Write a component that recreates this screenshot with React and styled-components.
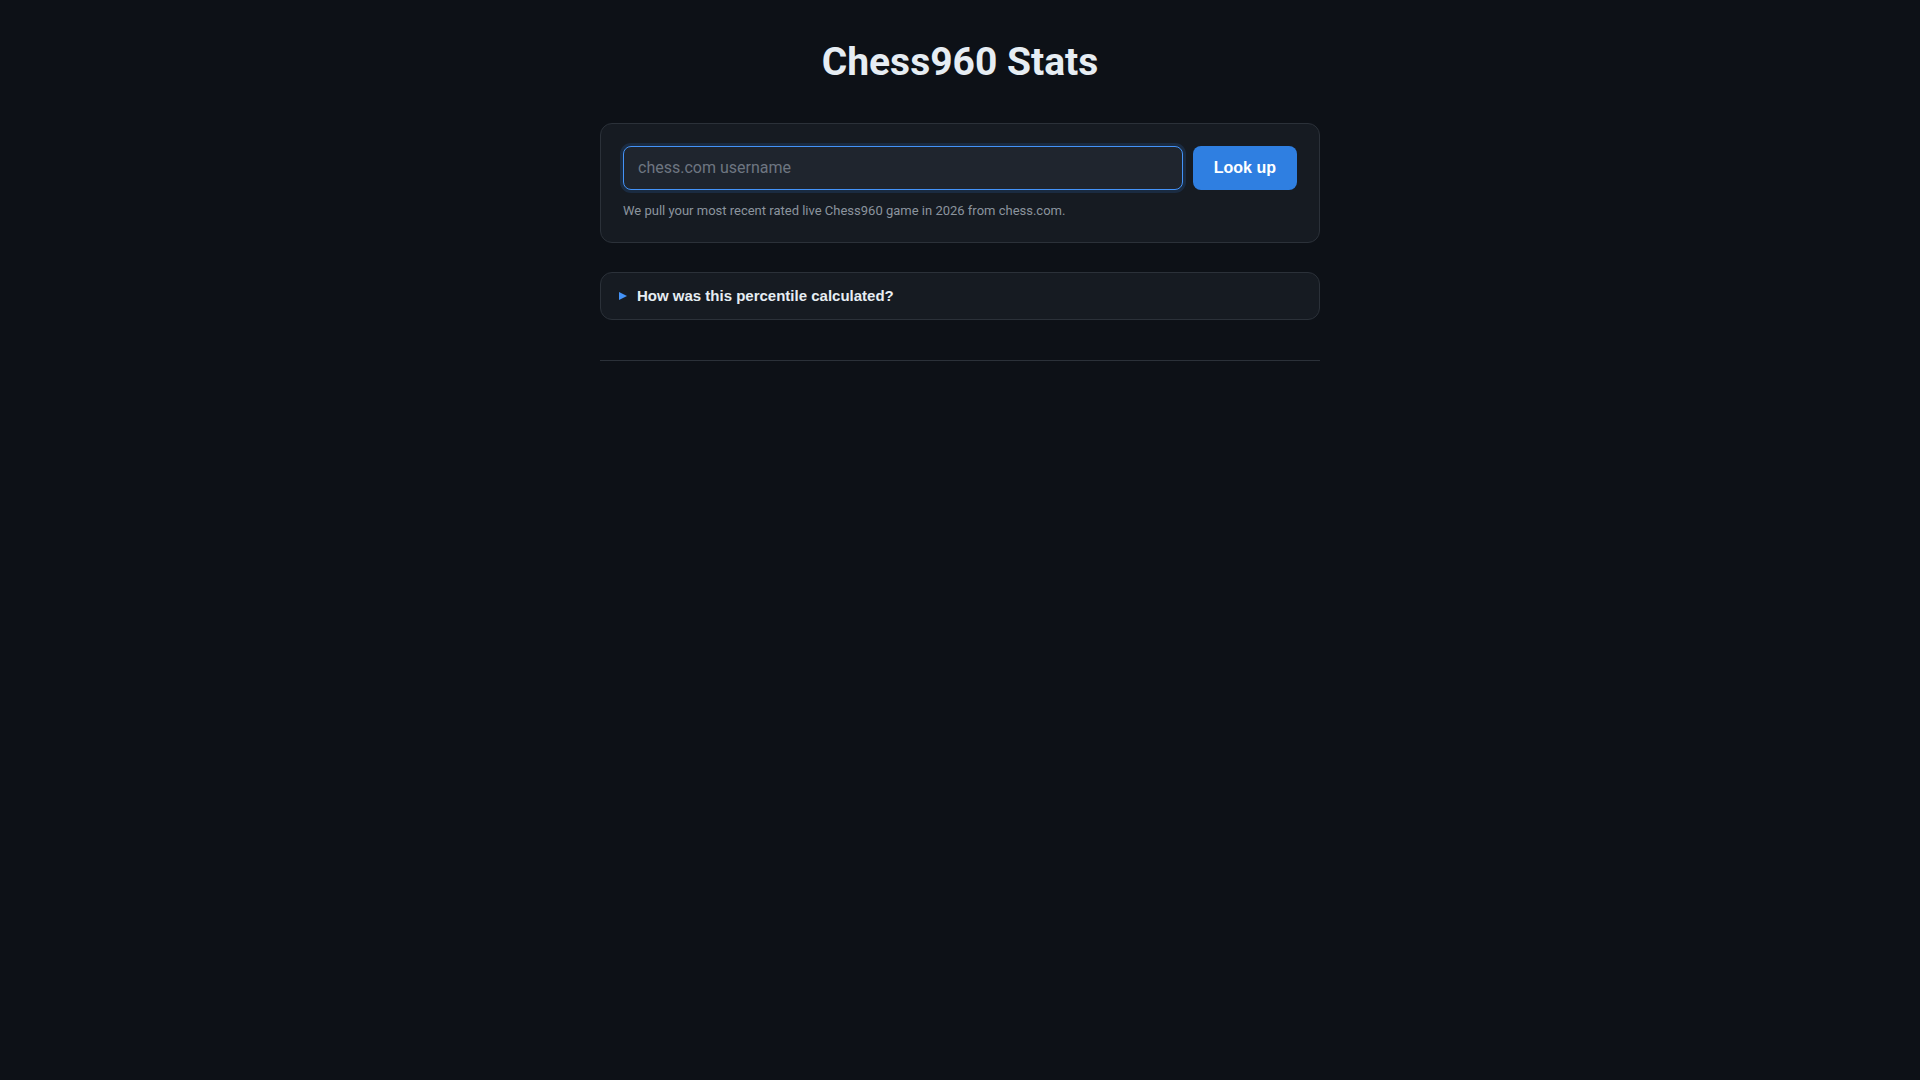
import React, { useState } from 'react';
import styled, { createGlobalStyle } from 'styled-components';

const GlobalStyle = createGlobalStyle`
  html, body {
    margin: 0;
    padding: 0;
    background-color: #0d1117;
    min-height: 100%;
  }

  body {
    font-family: Roboto, 'Noto Sans', sans-serif;
    color: #e6edf3;
  }

  * {
    box-sizing: border-box;
  }
`;

const Page = styled.main`
  min-height: 100vh;
  background-color: #0d1117;
  padding: 39px 0 40px;
`;

const Container = styled.div`
  width: 720px;
  margin: 0 auto;
`;

const Title = styled.h1`
  margin: 0 0 37px;
  text-align: center;
  font-family: Roboto, sans-serif;
  font-size: 39px;
  font-weight: 700;
  line-height: 1.2;
  color: #e6edf3;
`;

const Card = styled.section`
  background-color: #161b22;
  border: 1px solid #2b3139;
  border-radius: 12px;
  padding: 22px;
`;

const SearchForm = styled.form`
  display: flex;
  gap: 10px;
  margin: 0;
`;

const UsernameInput = styled.input`
  flex: 1;
  height: 44px;
  padding: 0 14px;
  font-family: Roboto, sans-serif;
  font-size: 16px;
  color: #e6edf3;
  background-color: #1f252e;
  border: 1px solid ${(props) => (props.$active ? '#4493f8' : '#30363d')};
  border-radius: 8px;
  outline: none;
  box-shadow: ${(props) =>
    props.$active ? '0 0 0 3px rgba(56, 139, 253, 0.14)' : 'none'};

  &::placeholder {
    color: #6e7681;
  }

  &:focus {
    border-color: #4493f8;
    box-shadow: 0 0 0 3px rgba(56, 139, 253, 0.14);
  }
`;

const LookupButton = styled.button`
  height: 44px;
  padding: 0 21px;
  font-family: 'Liberation Sans', Arial, sans-serif;
  font-size: 16px;
  font-weight: 700;
  color: #ffffff;
  background-color: #2f7fe1;
  border: none;
  border-radius: 8px;
  cursor: pointer;

  &:hover {
    background-color: #3a89ea;
  }
`;

const Hint = styled.p`
  margin: 12px 0 0;
  font-size: 13px;
  line-height: 1.4;
  color: #8b949e;
`;

const Explainer = styled.details`
  margin-top: 29px;
  background-color: #161b22;
  border: 1px solid #2b3139;
  border-radius: 12px;
`;

const ExplainerSummary = styled.summary`
  display: flex;
  align-items: center;
  gap: 10px;
  padding: 14.5px 18px;
  list-style: none;
  cursor: pointer;
  font-family: 'Liberation Sans', Arial, sans-serif;
  font-size: 15px;
  font-weight: 700;
  color: #e6edf3;

  &::-webkit-details-marker {
    display: none;
  }

  &::before {
    content: '';
    width: 0;
    height: 0;
    border-left: 8px solid #4493f8;
    border-top: 4.5px solid transparent;
    border-bottom: 4.5px solid transparent;
    transform: ${(props) => (props.$open ? 'rotate(90deg)' : 'none')};
  }
`;

const ExplainerBody = styled.div`
  padding: 0 18px 16px 36px;
  font-size: 14px;
  line-height: 1.5;
  color: #8b949e;
`;

const Footer = styled.footer`
  margin-top: 40px;
  border-top: 1px solid #2b3139;
`;

const App = () => {
  const [username, setUsername] = useState('');
  const [open, setOpen] = useState(false);

  const handleSubmit = (event) => {
    event.preventDefault();
  };

  return (
    <>
      <GlobalStyle />
      <Page>
        <Container>
          <Title>Chess960 Stats</Title>

          <Card>
            <SearchForm onSubmit={handleSubmit}>
              <UsernameInput
                type='text'
                placeholder='chess.com username'
                value={username}
                onChange={(e) => setUsername(e.target.value)}
                $active
              />
              <LookupButton type='submit'>Look up</LookupButton>
            </SearchForm>
            <Hint>
              We pull your most recent rated live Chess960 game in 2026 from
              chess.com.
            </Hint>
          </Card>

          <Explainer open={open} onToggle={(e) => setOpen(e.currentTarget.open)}>
            <ExplainerSummary $open={open}>
              How was this percentile calculated?
            </ExplainerSummary>
            <ExplainerBody>
              Your rating is compared against the distribution of all players
              with a rated live Chess960 game this year.
            </ExplainerBody>
          </Explainer>

          <Footer />
        </Container>
      </Page>
    </>
  );
};

export default App;
